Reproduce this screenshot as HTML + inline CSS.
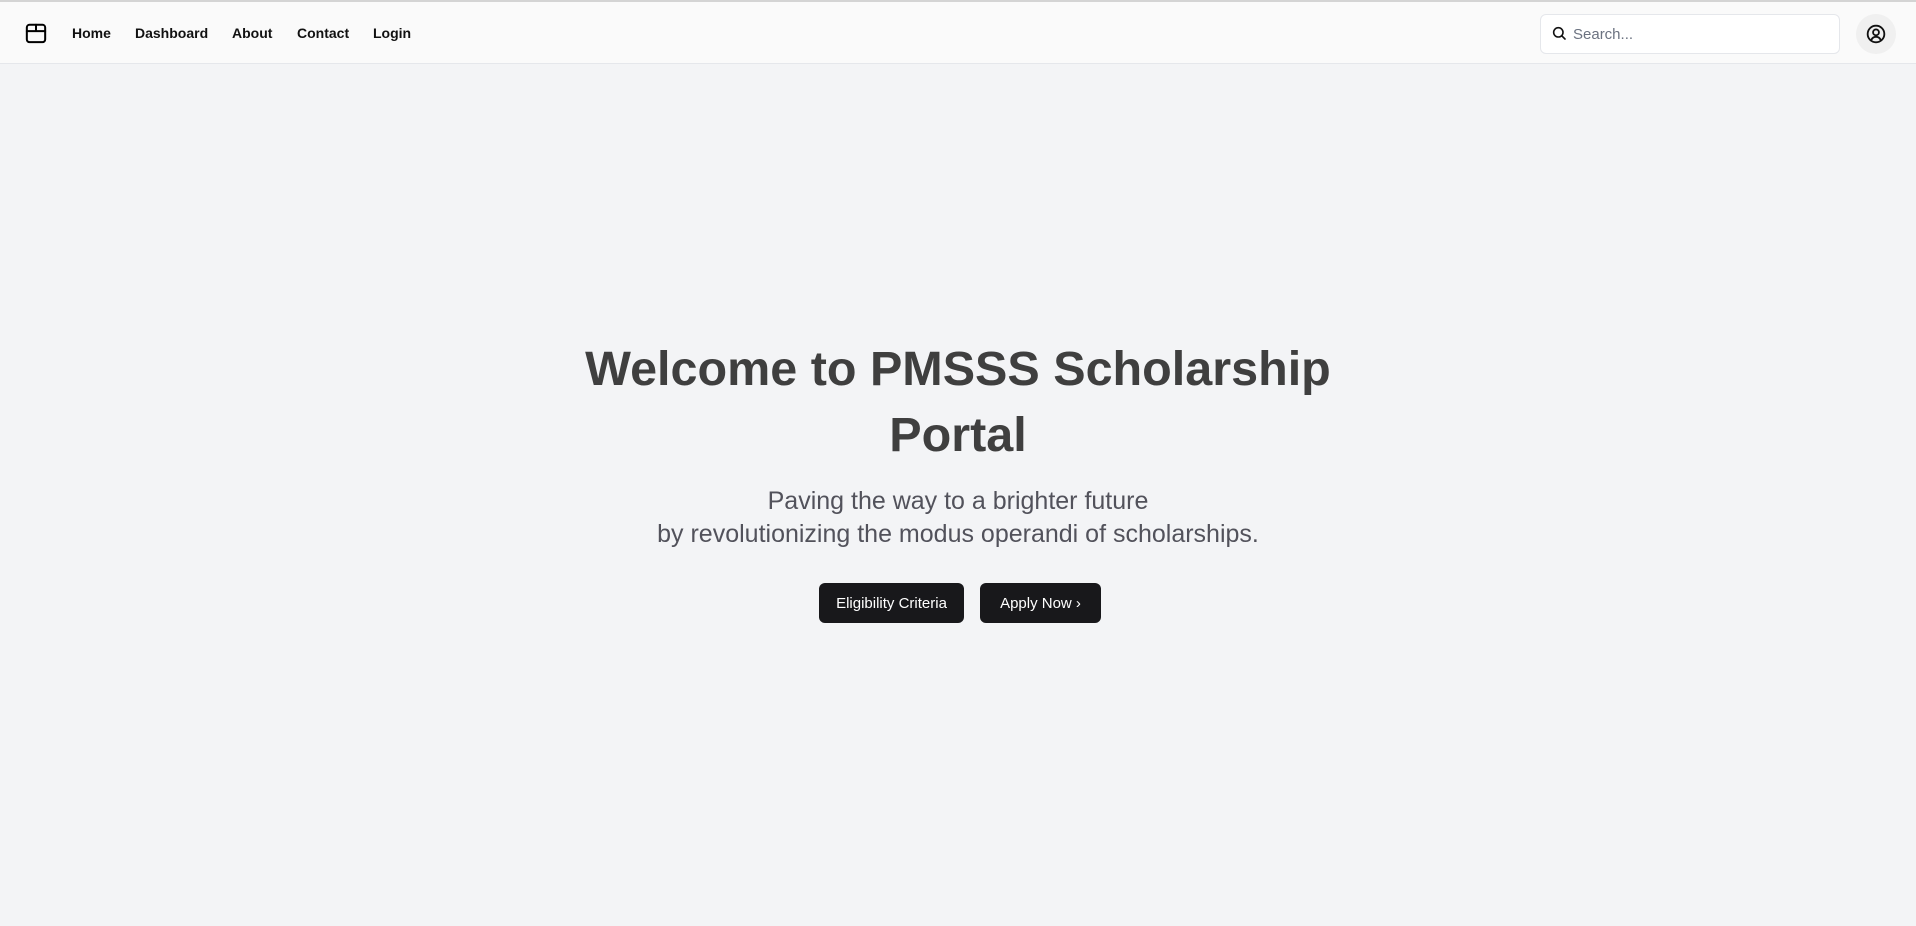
<!DOCTYPE html>
<html><head><meta charset="utf-8"><style>
*{box-sizing:border-box;margin:0;padding:0}
body{width:1916px;height:926px;background:#f3f4f6;font-family:"Liberation Sans",sans-serif;overflow:hidden;position:relative}
header{position:absolute;left:0;top:0;width:1916px;height:64px;background:#fafafa;border-top:2px solid #d4d4d4;border-bottom:1px solid #e5e7eb}
.logo{position:absolute;left:25px;top:20px}
nav a{position:absolute;top:23px;font-size:14px;font-weight:bold;color:#111;text-decoration:none}
.search{position:absolute;left:1540px;top:12px;width:300px;height:40px;background:#fff;border:1px solid #e5e7eb;border-radius:6px}
.search svg{position:absolute;left:10px;top:10px}
.search span{position:absolute;left:32px;top:11px;font-size:15px;color:#6b7280}
.av{position:absolute;left:1856px;top:12px;width:40px;height:40px;border-radius:50%;background:#f0f0f0}
.av svg{position:absolute;left:10px;top:10px}
h1{position:absolute;left:0;width:1916px;top:336px;text-align:center;font-size:48.5px;line-height:66px;color:#3f3f3f;font-weight:bold}
p{position:absolute;left:0;width:1916px;top:485px;text-align:center;font-size:25px;line-height:33px;color:#52525b}
.btn{position:absolute;top:583px;height:40px;background:#18181b;color:#fff;border-radius:6px;font-size:15px;line-height:41px;text-align:center}
</style></head><body>
<header>
<svg class="logo" width="22" height="22" viewBox="0 0 24 24" fill="none" stroke="#000" stroke-width="2.2" stroke-linecap="round" stroke-linejoin="round"><rect x="2" y="3" width="20" height="19" rx="3"/><path d="M2 10h20M12 3v7"/></svg>
<nav><a style="left:72px">Home</a><a style="left:135px">Dashboard</a><a style="left:232px">About</a><a style="left:297px">Contact</a><a style="left:373px">Login</a></nav>
<div class="search"><svg width="16" height="16" viewBox="0 0 24 24" fill="none" stroke="#111" stroke-width="2.4" stroke-linecap="round"><circle cx="11" cy="11" r="7"/><path d="M21 21l-5-5"/></svg><span>Search...</span></div>
<div class="av"><svg width="20" height="20" viewBox="0 0 24 24" fill="none" stroke="#111" stroke-width="2.2" stroke-linecap="round"><circle cx="12" cy="12" r="10"/><circle cx="12" cy="10" r="3.5"/><path d="M6.5 19a6 6 0 0 1 11 0"/></svg></div>
</header>
<h1>Welcome to PMSSS Scholarship<br>Portal</h1>
<p>Paving the way to a brighter future<br>by revolutionizing the modus operandi of scholarships.</p>
<div class="btn" style="left:819px;width:145px">Eligibility Criteria</div>
<div class="btn" style="left:980px;width:121px">Apply Now ›</div>
</body></html>
